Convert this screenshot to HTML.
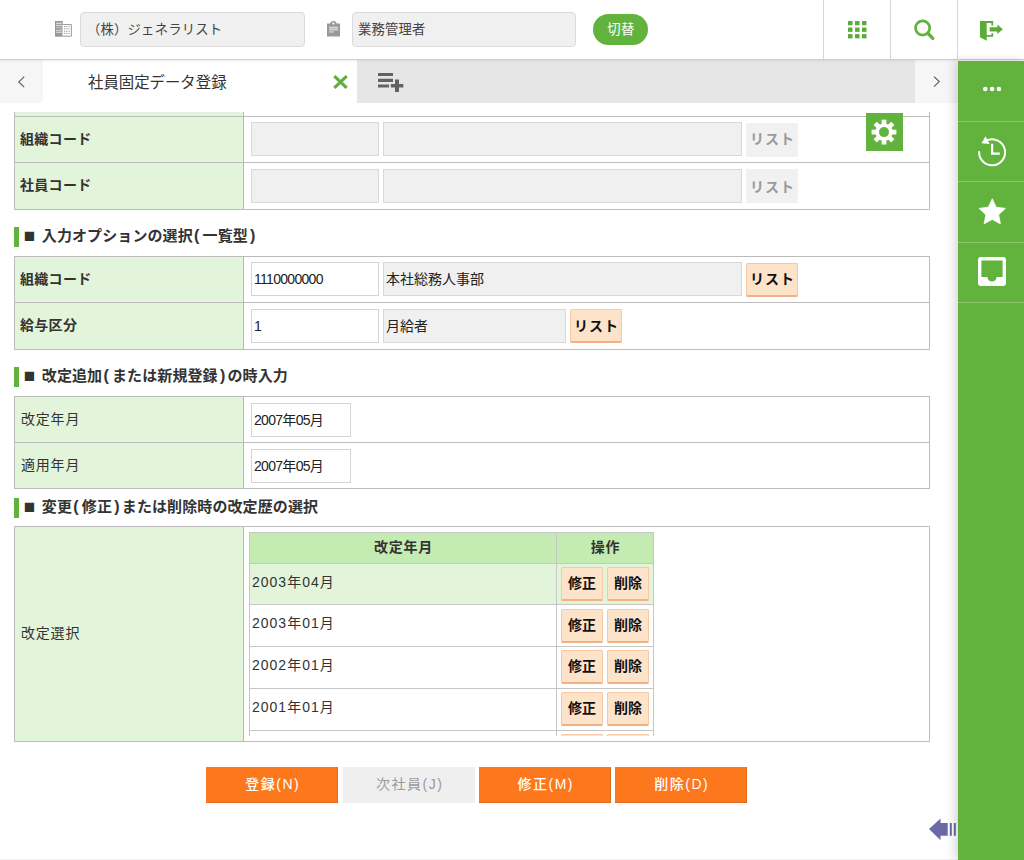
<!DOCTYPE html>
<html lang="ja">
<head>
<meta charset="utf-8">
<title>社員固定データ登録</title>
<style>
*{box-sizing:border-box;margin:0;padding:0}
html,body{width:1024px;height:860px;overflow:hidden;background:#fff}
body{font-family:"Liberation Sans","Noto Sans CJK JP",sans-serif;color:#333;font-size:14px;position:relative}
div,span{position:absolute;white-space:nowrap}
svg{position:absolute;overflow:visible}
#hdr{left:0;top:0;width:1024px;height:60px;background:#fff;border-bottom:1px solid #d0d0d0;box-shadow:0 1px 2px rgba(0,0,0,.08);z-index:3}
.hin{top:12px;height:35px;background:#f0f0f0;border:1px solid #dbdbdb;border-radius:4px;font-size:13.33px;line-height:34px;color:#444;overflow:hidden}
#sw{left:593px;top:14px;width:55px;height:31px;border-radius:16px;background:#62b33e;color:#fff;font-size:13.33px;line-height:31px;text-align:center;letter-spacing:.5px;padding-left:1px}
.vsep{top:0;width:1px;height:59px;background:#d6d6d6}
#tabs{left:0;top:60px;width:958px;height:43px;background:#e6e6e6}
#tabs .arr{top:0;width:43px;height:43px;background:#f6f6f6}
#tabA{left:43px;top:0;width:314px;height:43px;background:#fff}
#tabT{left:45px;top:1px;font-size:15.4px;line-height:44px;color:#333}
#side{left:958px;top:61px;width:66px;height:799px;z-index:4;background:#62b33e;box-shadow:-3px 0 9px rgba(0,0,0,.17)}
#side .ln{left:0;margin-top:-1px;width:66px;height:1px;background:#8bc870}
#content{left:0;top:112px;width:958px;height:640px;overflow:hidden}
.bx{border:1px solid #bcbcbc;background:#fff}
.lc{background:#e2f4da;border-right:1px solid #b4bcae}
.hl{height:1px;background:#bcbcbc}
.lt{left:21px;font-size:14px;color:#333;line-height:20px;letter-spacing:.8px}
.lt.b{left:20px;font-weight:bold;letter-spacing:.3px}
.inp{height:34px;border:1px solid #d4d4d4;background:#fff;font-size:14px;line-height:33px;padding-left:2px;color:#222;overflow:hidden;letter-spacing:-.7px}
.inp.g{background:#f0f0f0;border-color:#d9d9d9}
.inp.j{font-size:14px;color:#222;padding-left:2px;letter-spacing:0}
.lb{height:34px;font-size:14px;font-weight:bold;text-align:center;line-height:33px;letter-spacing:1px;padding-left:1px}
.lb.d{background:#f1f1f1;color:#9a9a9a}
.lb.o{background:#fee3cb;color:#111;border:1px solid #f6c8a4;border-bottom:2px solid #f3b183;border-radius:1.5px;line-height:31px}
.bar{left:14px;width:5px;height:20px;background:#62b33e}
.sq{left:23.8px;margin-top:-1px;font-size:19px;font-weight:bold;line-height:20px;color:#333}
.st{left:41.8px;margin-top:-1px;font-size:15px;font-weight:bold;line-height:20px;color:#333;letter-spacing:.1px}
.st i{font-style:normal;display:inline-block;position:static;width:9.8px;text-align:left;padding-left:1.2px;letter-spacing:0;font-size:16px;line-height:16px;vertical-align:0}
.st i.r{padding-left:2.2px}
.ob{top:767px;height:35.5px;width:132px;background:#fd771c;box-shadow:inset -1px -1px 0 rgba(190,90,40,.45);color:#fff;font-size:14px;text-align:center;line-height:34px;letter-spacing:1.5px;padding-left:1.5px;font-weight:500}
#hist{left:249px;top:420px;width:405px;height:204px;overflow:hidden;background:#fff}
#hist .c{border:1px solid #c6c6c6}
#hist .h{background:#c3ebb2;font-size:14px;font-weight:bold;color:#333;text-align:center;line-height:29px;letter-spacing:.7px;padding-left:1px}
#hist .d{font-size:14px;color:#333;line-height:36px;padding-left:2px;letter-spacing:1px;background:#fff}
#hist .d.s{background:#e2f4da}
.sb{width:42px;height:34px;background:#fee3cb;border:1px solid #f6c8a4;border-bottom:2px solid #f3b183;border-radius:1.5px;font-size:14px;font-weight:bold;color:#111;text-align:center;line-height:31px;letter-spacing:0}
#gear{left:866px;top:113px;width:37px;height:38px;background:#62b33e}
#foot{left:0;top:859px;width:958px;height:1px;background:#f1f1f1}
</style>
</head>
<body>
<div id="hdr">
<svg style="left:55px;top:21px" width="18" height="17" viewBox="0 0 18 17"><rect x="0" y="0" width="7.7" height="15.7" fill="#999"/><rect x="1" y="1.7" width="5.8" height="1.2" fill="#e0e0e0"/><rect x="1" y="3.9" width="5.8" height="1.2" fill="#dcdcdc"/><rect x="1" y="6.0" width="5.8" height="1.2" fill="#bdbdbd"/><rect x="1" y="8.7" width="5.8" height="1.2" fill="#d4d4d4"/><rect x="1" y="10.7" width="5.8" height="1.2" fill="#d8d8d8"/><path d="M7.7 3.5H16.4V15.2H7.7" fill="#fff" stroke="#9c9c9c" stroke-width="1"/><path d="M9.4 5.5H14.3" stroke="#cfcfcf" stroke-width=".6"/><path d="M9.4 7.8H14.3" stroke="#cfcfcf" stroke-width=".6"/><path d="M9.4 10.2H14.3" stroke="#cfcfcf" stroke-width=".6"/><path d="M9.4 12.3H14.3" stroke="#cfcfcf" stroke-width=".6"/><rect x="9.00" y="5.05" width="0.9" height="0.9" fill="#8a8a8a"/><rect x="9.00" y="7.35" width="0.9" height="0.9" fill="#8a8a8a"/><rect x="9.00" y="9.75" width="0.9" height="0.9" fill="#8a8a8a"/><rect x="9.00" y="11.85" width="0.9" height="0.9" fill="#8a8a8a"/><rect x="11.35" y="5.05" width="0.9" height="0.9" fill="#8a8a8a"/><rect x="11.35" y="7.35" width="0.9" height="0.9" fill="#8a8a8a"/><rect x="11.35" y="9.75" width="0.9" height="0.9" fill="#8a8a8a"/><rect x="11.35" y="11.85" width="0.9" height="0.9" fill="#8a8a8a"/><rect x="13.75" y="5.05" width="0.9" height="0.9" fill="#8a8a8a"/><rect x="13.75" y="7.35" width="0.9" height="0.9" fill="#8a8a8a"/><rect x="13.75" y="9.75" width="0.9" height="0.9" fill="#8a8a8a"/><rect x="13.75" y="11.85" width="0.9" height="0.9" fill="#8a8a8a"/></svg>
<div class="hin" style="left:80px;width:225px;padding-left:6px;letter-spacing:.2px">（株）ジェネラリスト</div>
<svg style="left:327px;top:21px" width="13" height="15.5" viewBox="0 0 13 15.5"><path d="M0 2.5H3.3A3.1 2.6 0 0 1 9.5 2.5H13V15.4H0z" fill="#999"/><circle cx="6.4" cy="2.4" r="1" fill="#fff"/><rect x="2.1" y="5.7" width="9" height="1.7" fill="#d9d9d9"/><rect x="2.1" y="7.4" width="9" height=".5" fill="#c4c4c4"/><rect x="2.1" y="7.9" width="9" height="1.6" fill="#d2d2d2"/><rect x="2.1" y="10.4" width="4.6" height="1.1" fill="#e2e2e2"/></svg>
<div class="hin" style="left:352px;width:224px;padding-left:5px;letter-spacing:.2px">業務管理者</div>
<div id="sw">切替</div>
<div class="vsep" style="left:823px"></div>
<div class="vsep" style="left:890px"></div>
<div class="vsep" style="left:957px"></div>
<svg style="left:848px;top:21px" width="18.4" height="17.4" viewBox="0 0 18 17"><rect x="0" y="0" width="4.4" height="4.2" fill="#5aab38"/><rect x="0" y="6.4" width="4.4" height="4.2" fill="#5aab38"/><rect x="0" y="12.8" width="4.4" height="4.2" fill="#5aab38"/><rect x="6.9" y="0" width="4.4" height="4.2" fill="#5aab38"/><rect x="6.9" y="6.4" width="4.4" height="4.2" fill="#5aab38"/><rect x="6.9" y="12.8" width="4.4" height="4.2" fill="#5aab38"/><rect x="13.7" y="0" width="4.4" height="4.2" fill="#5aab38"/><rect x="13.7" y="6.4" width="4.4" height="4.2" fill="#5aab38"/><rect x="13.7" y="12.8" width="4.4" height="4.2" fill="#5aab38"/></svg><svg style="left:913px;top:19px" width="23" height="23" viewBox="0 0 23 23"><circle cx="9.6" cy="9" r="7.1" fill="none" stroke="#62b33e" stroke-width="2.7"/><path d="M14.8 14.3L19.8 19.4" stroke="#62b33e" stroke-width="3.4" stroke-linecap="round"/></svg><svg style="left:980px;top:21px" width="24" height="21" viewBox="0 0 24 21"><path d="M0 0H13.2V4.6H11.4V2H6.7V14H11.4V12.2H13.2V15.7H6.7V19.8L0 16.3z" fill="#5aab38"/><path d="M9.65 6.3H17.3V3.4L22.9 8.3L17.3 13.1V10.4H9.65z" fill="#5aab38"/></svg>
</div>
<div id="tabs">
<div class="arr" style="left:0"></div>
<div id="tabA"><div id="tabT">社員固定データ登録</div></div>
<div class="arr" style="left:915px"></div>
</div>
<svg style="left:333.3px;top:75px" width="15" height="14" viewBox="0 0 15 14"><path d="M1.3 1.2L13.7 12.8M13.7 1.2L1.3 12.8" stroke="#62ad41" stroke-width="3.2"/></svg><svg style="left:378px;top:73px" width="26" height="19" viewBox="0 0 26 19"><path d="M0 0h15v3.1h-15zM0 5.8h15v3.1h-15zM0 11.5h11v3.1h-11zM17 6.6h4v4.3h4.3v3.7h-4.3v4.3h-4v-4.3h-4.2v-3.7h4.2z" fill="#626262"/></svg><svg style="left:17px;top:76px" width="9" height="12" viewBox="0 0 9 12"><path d="M7.2 0.7L1.8 5.9L7.2 11.1" fill="none" stroke="#5a5a5a" stroke-width="1.15"/></svg><svg style="left:932px;top:76px" width="9" height="12" viewBox="0 0 9 12"><path d="M2 0.7L7.2 5.6L2 10.6" fill="none" stroke="#5a5a5a" stroke-width="1.15"/></svg>
<div id="content">
<div class="bx" style="left:14px;top:-42px;width:916px;height:140px"></div><div class="lc" style="left:15px;top:-41px;width:229px;height:138px"></div><div class="hl" style="left:14px;top:4px;width:916px"></div><div class="lt b" style="top:17px">組織コード</div><div class="hl" style="left:14px;top:50px;width:916px"></div><div class="lt b" style="top:63px">社員コード</div>
<div class="inp g" style="left:251px;top:10px;width:128px"></div><div class="inp g" style="left:383px;top:10px;width:359px"></div><div class="lb d" style="left:746px;top:11px;width:52px">リスト</div>
<div class="inp g" style="left:251px;top:57px;width:128px"></div><div class="inp g" style="left:383px;top:57px;width:359px"></div><div class="lb d" style="left:746px;top:57px;width:52px;line-height:36px">リスト</div>
<div class="bar" style="top:115px"></div><div class="sq" style="top:115px">■</div><div class="st" style="top:115px">入力オプションの選択<i>(</i>一覧型<i class="r">)</i></div>
<div class="bx" style="left:14px;top:144px;width:916px;height:94px"></div><div class="lc" style="left:15px;top:145px;width:229px;height:92px"></div><div class="lt b" style="top:157px">組織コード</div><div class="hl" style="left:14px;top:190px;width:916px"></div><div class="lt b" style="top:203px">給与区分</div>
<div class="inp " style="left:251px;top:150px;width:128px">1110000000</div><div class="inp g j" style="left:383px;top:150px;width:359px">本社総務人事部</div><div class="lb o" style="left:746px;top:151px;width:52px">リスト</div>
<div class="inp " style="left:251px;top:197px;width:128px">1</div><div class="inp g j" style="left:383px;top:197px;width:183px">月給者</div><div class="lb o" style="left:570px;top:197px;width:52px;line-height:33px">リスト</div>
<div class="bar" style="top:255px"></div><div class="sq" style="top:255px">■</div><div class="st" style="top:255px">改定追加<i>(</i>または新規登録<i class="r">)</i>の時入力</div>
<div class="bx" style="left:14px;top:284px;width:916px;height:93px"></div><div class="lc" style="left:15px;top:285px;width:229px;height:91px"></div><div class="lt" style="top:297px">改定年月</div><div class="hl" style="left:14px;top:330px;width:916px"></div><div class="lt" style="top:343px">適用年月</div>
<div class="inp " style="left:251px;top:291px;width:100px">2007年05月</div><div class="inp " style="left:251px;top:337px;width:100px">2007年05月</div>
<div class="bar" style="top:386px"></div><div class="sq" style="top:386px">■</div><div class="st" style="top:386px">変更<i>(</i>修正<i class="r">)</i>または削除時の改定歴の選択</div>
<div class="bx" style="left:14px;top:414px;width:916px;height:216px"></div><div class="lc" style="left:15px;top:415px;width:229px;height:214px"></div><div class="lt" style="top:511px">改定選択</div>
<div id="hist"><div class="c h" style="left:0;top:0;width:308px;height:32px">改定年月</div><div class="c h" style="left:307px;top:0;width:98px;height:32px">操作</div><div class="c d s" style="left:0;top:31px;width:308px;height:42px">2003年04月</div><div class="c d s" style="left:307px;top:31px;width:98px;height:42px"></div><div class="sb" style="left:312px;top:35px">修正</div><div class="sb" style="left:358px;top:35px">削除</div><div class="c d" style="left:0;top:72px;width:308px;height:43px">2003年01月</div><div class="c d" style="left:307px;top:72px;width:98px;height:43px"></div><div class="sb" style="left:312px;top:77px">修正</div><div class="sb" style="left:358px;top:77px">削除</div><div class="c d" style="left:0;top:114px;width:308px;height:43px">2002年01月</div><div class="c d" style="left:307px;top:114px;width:98px;height:43px"></div><div class="sb" style="left:312px;top:118px">修正</div><div class="sb" style="left:358px;top:118px">削除</div><div class="c d" style="left:0;top:156px;width:308px;height:43px">2001年01月</div><div class="c d" style="left:307px;top:156px;width:98px;height:43px"></div><div class="sb" style="left:312px;top:160px">修正</div><div class="sb" style="left:358px;top:160px">削除</div><div class="c d" style="left:0;top:198px;width:308px;height:43px">2000年01月</div><div class="c d" style="left:307px;top:198px;width:98px;height:43px"></div><div class="sb" style="left:312px;top:202px">修正</div><div class="sb" style="left:358px;top:202px">削除</div></div>
</div>
<div id="gear"><svg style="left:0;top:0" width="37" height="38" viewBox="0 0 37 38"><rect x="15.6" y="6.700000000000001" width="4.8" height="12.4" fill="#fff" transform="rotate(0.0 18 19.1)"/><rect x="15.6" y="6.700000000000001" width="4.8" height="12.4" fill="#fff" transform="rotate(45.0 18 19.1)"/><rect x="15.6" y="6.700000000000001" width="4.8" height="12.4" fill="#fff" transform="rotate(90.0 18 19.1)"/><rect x="15.6" y="6.700000000000001" width="4.8" height="12.4" fill="#fff" transform="rotate(135.0 18 19.1)"/><rect x="15.6" y="6.700000000000001" width="4.8" height="12.4" fill="#fff" transform="rotate(180.0 18 19.1)"/><rect x="15.6" y="6.700000000000001" width="4.8" height="12.4" fill="#fff" transform="rotate(225.0 18 19.1)"/><rect x="15.6" y="6.700000000000001" width="4.8" height="12.4" fill="#fff" transform="rotate(270.0 18 19.1)"/><rect x="15.6" y="6.700000000000001" width="4.8" height="12.4" fill="#fff" transform="rotate(315.0 18 19.1)"/><circle cx="18" cy="19.1" r="8.7" fill="#fff"/><circle cx="18" cy="19.1" r="5" fill="#62b33e"/></svg></div>
<div class="ob" style="left:206px">登録(N)</div>
<div class="ob" style="left:343px;background:#efefef;color:#9a9a9a;font-weight:400;box-shadow:none">次社員(J)</div>
<div class="ob" style="left:479px">修正(M)</div>
<div class="ob" style="left:615px">削除(D)</div>
<svg style="left:929px;top:818px" width="29" height="23" viewBox="0 0 29 23"><path d="M0 11L11.5 0.5V5h7.2v12.8h-7.2v4.5z" fill="#6b6aa6"/><rect x="20.8" y="5" width="2" height="12.8" fill="#6b6aa6"/><rect x="24.8" y="5" width="2" height="12.8" fill="#6b6aa6"/></svg>
<div id="foot"></div>
<div id="side">
<div class="ln" style="top:61px"></div>
<div class="ln" style="top:121px"></div>
<div class="ln" style="top:182px"></div>
<div class="ln" style="top:242px"></div>
<svg style="left:24px;top:25px" width="20" height="6" viewBox="0 0 20 6"><circle cx="3.3" cy="3" r="2.3" fill="#fff"/><circle cx="10.1" cy="3" r="2.3" fill="#fff"/><circle cx="16.9" cy="3" r="2.3" fill="#fff"/></svg><svg style="left:18px;top:74px" width="34" height="34" viewBox="0 0 34 34"><path d="M11.6 5.1A13 13 0 1 1 3.1 16.9" fill="none" stroke="#fff" stroke-width="2" stroke-linecap="round"/><path d="M5.5 8.2L9.5 1.3L13.6 8.9z" fill="#fff"/><path d="M16.1 8.7V18.65H23.8" fill="none" stroke="#fff" stroke-width="2.2"/></svg><svg style="left:20.2px;top:136.6px" width="28.5" height="27.5" viewBox="0 0 28 27"><path d="M14.00 0.80L17.88 9.06L26.93 10.20L20.28 16.44L21.99 25.40L14.00 21.00L6.01 25.40L7.72 16.44L1.07 10.20L10.12 9.06z" fill="#fff" stroke="#fff" stroke-width="0.8" stroke-linejoin="round"/></svg><svg style="left:20px;top:196px" width="28" height="29" viewBox="0 0 28 29"><path d="M3 0h22a3 3 0 0 1 3 3v23a3 3 0 0 1 -3 3h-22a3 3 0 0 1 -3 -3v-23a3 3 0 0 1 3 -3zM3.4 3.4v16.6h6a4.6 4.6 0 0 0 9.2 0h6v-16.6z" fill="#fff" fill-rule="evenodd"/></svg>
</div>
</body>
</html>
